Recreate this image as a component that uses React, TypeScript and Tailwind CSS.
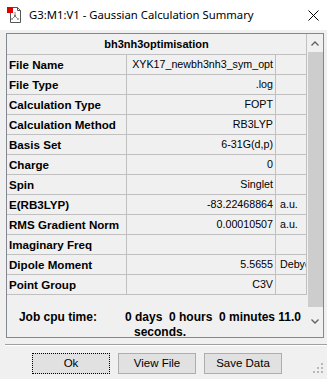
const rows: [string, string, string][] = [
  ["File Name", "XYK17_newbh3nh3_sym_opt", ""],
  ["File Type", ".log", ""],
  ["Calculation Type", "FOPT", ""],
  ["Calculation Method", "RB3LYP", ""],
  ["Basis Set", "6-31G(d,p)", ""],
  ["Charge", "0", ""],
  ["Spin", "Singlet", ""],
  ["E(RB3LYP)", "-83.22468864", "a.u."],
  ["RMS Gradient Norm", "0.00010507", "a.u."],
  ["Imaginary Freq", "", ""],
  ["Dipole Moment", "5.5655", "Debye"],
  ["Point Group", "C3V", ""],
];

function AppIcon() {
  return (
    <svg width="16" height="18" viewBox="0 0 16 18" className="shrink-0">
      <path d="M3.5 1.5h7l3 3v12h-10z" fill="#fff" stroke="#555" />
      <path d="M10.5 1.5v3h3" fill="none" stroke="#555" />
      <path d="M8 6v4M8 10l-3 3M8 10l3 3" stroke="#888" strokeWidth="1" />
      <circle cx="8" cy="10" r="1.2" fill="#777" />
      <circle cx="5" cy="13" r="1" fill="#999" />
      <circle cx="11" cy="13" r="1" fill="#999" />
      <rect x="0" y="1" width="6" height="6" fill="#e00000" />
    </svg>
  );
}

function Chevron({ up }: { up?: boolean }) {
  return (
    <svg width="8" height="5" viewBox="0 0 8 5">
      <path
        d={up ? "M0.5 4.5L4 1L7.5 4.5" : "M0.5 0.5L4 4L7.5 0.5"}
        fill="none"
        stroke="#606060"
        strokeWidth="1.3"
      />
    </svg>
  );
}

export default function App() {
  return (
    <div className="flex h-[379px] w-[327px] flex-col overflow-hidden bg-[#f0f0f0] font-['Liberation_Sans',Arial,sans-serif] text-black">
      <div className="flex h-[30px] shrink-0 items-center bg-white pl-[7px] pr-[7px]">
        <AppIcon />
        <span className="ml-[6px] font-['Noto_Sans',sans-serif] text-[11.3px] text-black">
          G3:M1:V1 - Gaussian Calculation Summary
        </span>
        <svg width="11" height="11" viewBox="0 0 11 11" className="ml-auto mr-[1px]">
          <path d="M0.5 0.5L10.5 10.5M10.5 0.5L0.5 10.5" stroke="#000" strokeWidth="1" />
        </svg>
      </div>

      <div className="ml-[6px] mt-[3px] flex h-[305px] w-[318px] overflow-hidden border border-[#828790] bg-[#f0f0f0]">
        <div className="flex w-[300px] flex-col text-[11px]">
          <div className="flex h-[21px] shrink-0 items-center justify-center border-b border-r border-[#c0c0c0] font-bold">
            bh3nh3optimisation
          </div>
          {rows.map(([label, value, unit]) => (
            <div key={label} className="flex h-[20px] shrink-0 border-b border-[#c0c0c0]">
              <div className="flex w-[120px] items-center whitespace-nowrap border-r border-[#c0c0c0] pl-[2px] text-[11.6px] font-bold">
                {label}
              </div>
              <div className="flex w-[149px] items-center justify-end whitespace-nowrap border-r border-[#c0c0c0] pr-[2px] text-[10.7px]">
                {value}
              </div>
              <div className="flex w-[31px] items-center overflow-hidden whitespace-nowrap border-r border-[#c0c0c0] pl-[4px] text-[10.7px]">
                {unit}
              </div>
            </div>
          ))}
          <div className="pl-[8px] pr-[2px] pt-[15px] text-center text-[12px] font-bold leading-[15px]">
            Job cpu time:<span className="inline-block w-[28px]" />0 days&nbsp;&nbsp;0 hours&nbsp;&nbsp;0 minutes 11.0 seconds.
          </div>
        </div>
        <div className="flex w-[16px] flex-col items-center bg-[#f0f0f0]">
          <div className="flex h-[18px] w-full items-center justify-center">
            <Chevron up />
          </div>
          <div className="h-[255px] w-[15px] bg-[#cdcdcd]" />
          <div className="flex flex-1 items-center justify-center pb-[2px]">
            <Chevron />
          </div>
        </div>
      </div>

      <div className="ml-[5px] mt-[6px] h-[2px] border-b border-t border-b-white border-t-[#a0a0a0]" />

      <div className="relative flex flex-1 items-start gap-[8px] pl-[32px] pt-[7px] text-[11.5px]">
        <button className="flex h-[21px] w-[78px] items-center justify-center border border-dotted border-black bg-[#e1e1e1]">
          Ok
        </button>
        <button className="flex h-[21px] w-[78px] items-center justify-center border border-[#adadad] bg-[#e1e1e1]">
          View File
        </button>
        <button className="flex h-[21px] w-[78px] items-center justify-center border border-[#adadad] bg-[#e1e1e1]">
          Save Data
        </button>
        <svg width="10" height="10" viewBox="0 0 10 10" className="absolute bottom-[6px] right-[4px]">
          <rect x="8" y="0" width="2" height="2" fill="#b8b8b8" />
          <rect x="4" y="4" width="2" height="2" fill="#b8b8b8" />
          <rect x="8" y="4" width="2" height="2" fill="#b8b8b8" />
          <rect x="0" y="8" width="2" height="2" fill="#b8b8b8" />
          <rect x="4" y="8" width="2" height="2" fill="#b8b8b8" />
          <rect x="8" y="8" width="2" height="2" fill="#b8b8b8" />
        </svg>
      </div>
    </div>
  );
}
